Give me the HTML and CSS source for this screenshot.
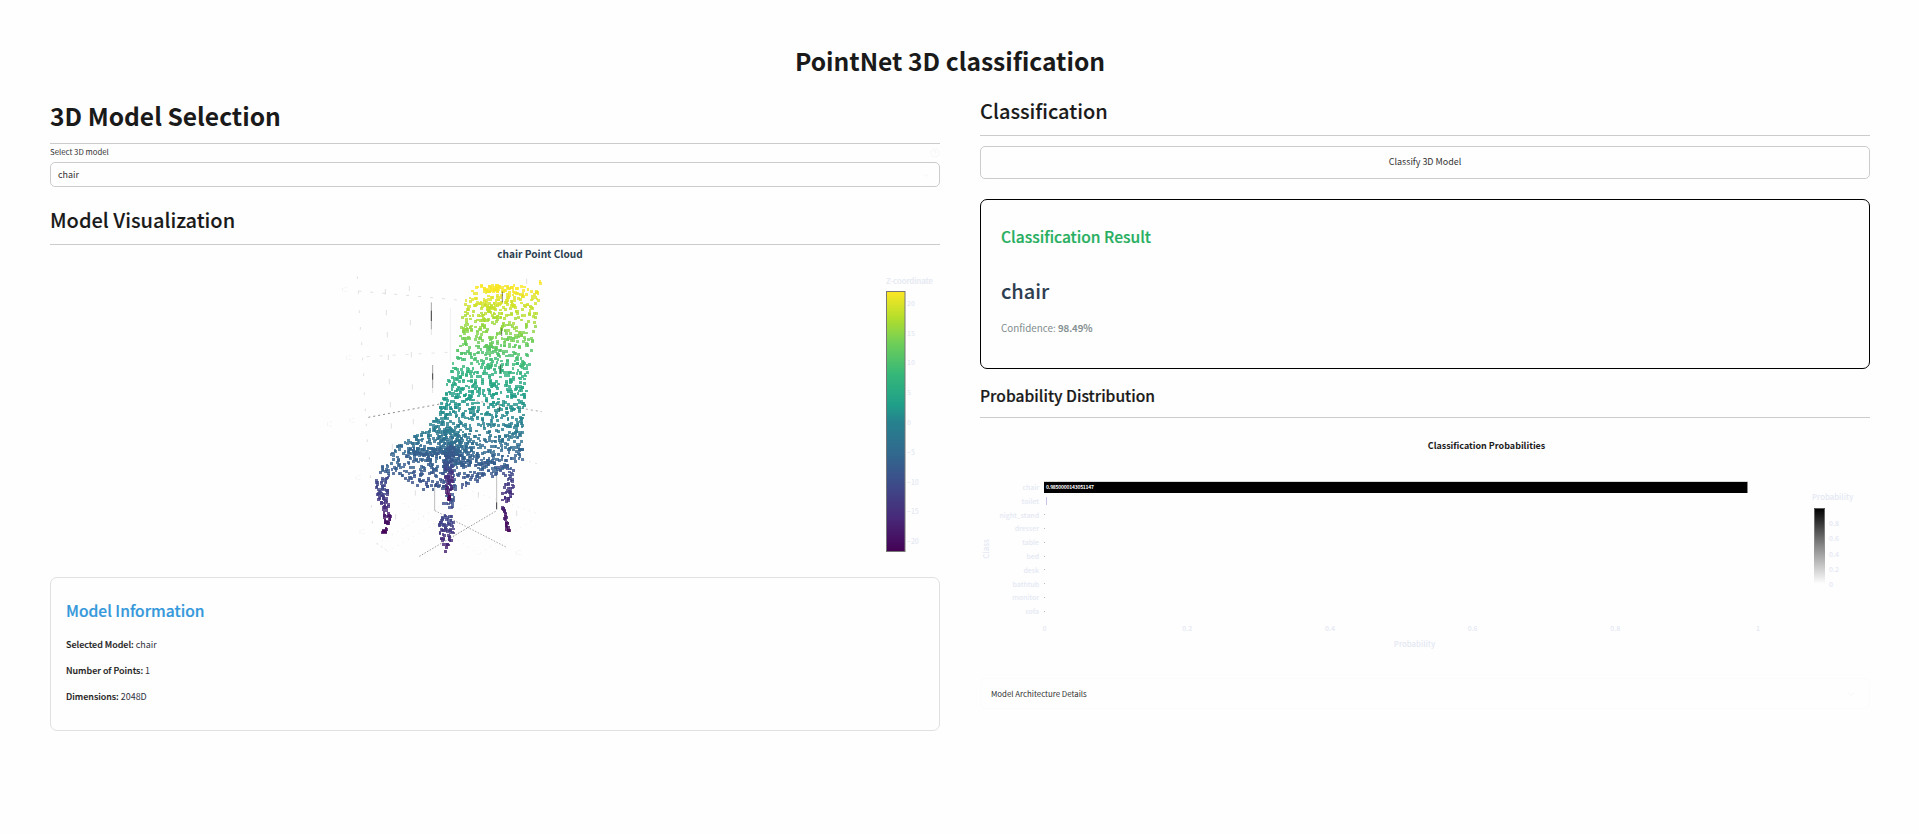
FILE: index.html
```html
<!DOCTYPE html>
<html lang="en">
<head>
<meta charset="utf-8">
<title>PointNet 3D classification</title>
<link rel="stylesheet" href="styles.css">
</head>
<body>
<main class="page">
  <h1 class="title">PointNet 3D classification</h1>
  <div class="columns">
    <section class="column">
      <h1 class="heading heading-xl">3D Model Selection</h1>
      <div class="label-row">
        <label class="label">Select 3D model</label>
        <svg class="help" viewBox="0 0 10 10"><circle cx="5" cy="5" r="4.2"/><path d="M3.8 4a1.2 1.2 0 1 1 1.2 1.3v.6M5 7v.5"/></svg>
      </div>
      <div class="select"><span>chair</span><svg class="chevron" viewBox="0 0 8 8"><path d="M1.5 3 4 5.5 6.500 3"/></svg></div>
      <h2 class="heading heading-lg heading-vis">Model Visualization</h2>
      <svg class="cloud" viewBox="50 245 890 332">
        <defs>
          <linearGradient id="viridis" x1="0" y1="1" x2="0" y2="0">
            <stop offset="0" stop-color="#440154"/><stop offset=".125" stop-color="#482878"/><stop offset=".25" stop-color="#3e4989"/><stop offset=".375" stop-color="#31688e"/><stop offset=".5" stop-color="#26828e"/><stop offset=".56" stop-color="#1f9e89"/><stop offset=".68" stop-color="#35b779"/><stop offset=".8" stop-color="#6ece58"/><stop offset=".9" stop-color="#b5de2b"/><stop offset="1" stop-color="#fde725"/>
          </linearGradient>
        </defs>
        <text class="cloud-title" x="540" y="258" text-anchor="middle">chair Point Cloud</text>
        <g id="grid" class="grid"></g>
        <g id="points"></g>
        <text class="bar-title" x="886" y="284" textLength="47">Z-coordinate</text>
        <rect x="886.5" y="291.500" width="18.500" height="260" fill="url(#viridis)" stroke="#777" stroke-width="1"/>
        <g id="z-ticks" class="tick"></g>
      </svg>
      <div class="info">
        <h3 class="info-title">Model Information</h3>
        <p><strong>Selected Model:</strong> chair</p>
        <p><strong>Number of Points:</strong> 1</p>
        <p><strong>Dimensions:</strong> 2048D</p>
      </div>
    </section>
    <section class="column">
      <h2 class="heading heading-lg heading-cls">Classification</h2>
      <button class="button">Classify 3D Model</button>
      <div class="result">
        <h3 class="result-title">Classification Result</h3>
        <h2 class="result-name">chair</h2>
        <p class="confidence">Confidence: <strong>98.49%</strong></p>
      </div>
      <h3 class="heading heading-md">Probability Distribution</h3>
      <svg class="probs" viewBox="980 418 890 260">
        <defs>
          <linearGradient id="grays" x1="0" y1="1" x2="0" y2="0"><stop offset="0" stop-color="#fff"/><stop offset=".5" stop-color="#888"/><stop offset="1" stop-color="#000"/></linearGradient>
        </defs>
        <text class="probs-title" x="1486.500" y="449.300" text-anchor="middle">Classification Probabilities</text>
        <rect x="1044" y="481" width="704" height="1" fill="#d5dad8"/>
        <rect x="1044" y="482" width="704" height="11" fill="#000"/>
        <rect x="1747" y="482" width="1" height="11" fill="#888"/>
        <text class="bar-value" x="1046" y="489" textLength="48">0.9850000143051147</text>
        <rect x="1046" y="497" width="1" height="8" fill="#c9c2e4"/>
        <g id="classes" class="tick"></g>
        <g id="x-ticks" class="tick"></g>
        <text class="axis-title" x="1414.500" y="647" text-anchor="middle">Probability</text>
        <text class="axis-title" transform="translate(989 549) rotate(-90)" text-anchor="middle">Class</text>
        <text class="axis-title" x="1812" y="500">Probability</text>
        <rect x="1814" y="508" width="11" height="76" fill="url(#grays)"/>
        <path d="M1814.500 550V508.500H1824.500V550" fill="none" stroke="#999" stroke-opacity=".6"/>
        <g id="p-ticks" class="tick"></g>
      </svg>
      <div class="expander"><span>Model Architecture Details</span><svg class="chevron" viewBox="0 0 8 8"><path d="M1.500 3 4 5.500 6.500 3"/></svg></div>
    </section>
  </div>
</main>
<script src="charts.js"></script>
</body>
</html>
```

FILE: styles.css
```css
* { box-sizing: border-box; }
body {
  margin: 0;
  background: #fefefe;
  color: #31333f;
  font-family: "Noto Sans CJK SC", "Noto Sans", sans-serif;
  font-size: 8.95px;
}
h1, h2, h3, p { margin: 0; }
.page { height: 833px; padding: 43px 49px 0 50px; overflow: hidden; }
.title { height: 34px; margin-bottom: 18px; padding-right: 20px; line-height: 34px; font-size: 24.6px; font-weight: 700; color: #1a1a1a; text-align: center; }
.columns { display: grid; grid-template-columns: 890px 890px; gap: 40px; }
.column { display: flex; flex-direction: column; }
.heading { border-bottom: 1px solid #ccc; color: #1a1a1a; }
.heading-xl { height: 49px; padding-top: 2px; line-height: 36px; font-size: 24.6px; font-weight: 700; }
.heading-lg { font-size: 20px; font-weight: 500; -webkit-text-stroke: 0.1px; }
.heading-vis { height: 58px; padding-top: 15px; line-height: 36px; }
.heading-cls { height: 41px; line-height: 32px; }
.heading-md { height: 49px; padding-top: 14px; line-height: 24px; font-size: 15.6px; font-weight: 500; -webkit-text-stroke: 0.2px; }
.label-row { display: flex; align-items: center; justify-content: space-between; height: 18px; }
.label { height: 18px; font-size: 7.8px; line-height: 16px; color: #333; }
.help { width: 10px; height: 10px; fill: none; stroke: #f6f6f8; stroke-width: 1; }
.select { display: flex; align-items: center; justify-content: space-between; height: 25px; padding: 0 9px 0 7px; border: 1px solid #ccc; border-radius: 5px; line-height: 23px; color: #333; }
.chevron { width: 8px; height: 8px; fill: none; stroke: #f5f6f8; stroke-width: 1; }
.cloud { display: block; width: 890px; height: 332px; }
.cloud-title { font-size: 10.1px; font-weight: 700; fill: #2c3e50; }
.grid { stroke: #000; stroke-width: 1; fill: none; }
.bar-title { font-size: 8px; fill: #e8ebf3; font-weight: 700; }
.tick { font-size: 6.9px; fill: #e4e8f3; font-weight: 500; }
.axis-title { font-size: 7.8px; fill: #e4e8f3; font-weight: 500; }
.info { height: 154px; padding: 20px 15px 0; border: 1px solid #e0e0e0; border-radius: 7px; }
.info-title { height: 24px; margin-bottom: 10px; line-height: 24px; font-size: 15.6px; font-weight: 500; color: #3498db; -webkit-text-stroke: 0.2px; }
.info p { height: 26px; line-height: 26px; }
.info strong { font-weight: 500; color: #1a1a1a; -webkit-text-stroke: 0.15px; }
.button { height: 33px; margin-top: 10px; padding: 0 0 1px; border: 1px solid #ccc; border-radius: 5px; background: transparent; color: #333; font: 400 8.95px/28px "Noto Sans CJK SC", sans-serif; }
.result { height: 170px; margin-top: 20px; padding: 24px 20px; border: 1px solid #000; border-radius: 7px; }
.result-title { line-height: 24px; font-size: 15.6px; font-weight: 500; color: #27ae60; -webkit-text-stroke: 0.2px; }
.result-name { margin-top: 26px; line-height: 34px; font-size: 20px; font-weight: 500; color: #2c3e50; -webkit-text-stroke: 0.1px; }
.confidence { margin-top: 11px; line-height: 18px; font-size: 9.85px; color: #7f8c8d; }
.confidence strong { font-weight: 500; -webkit-text-stroke: 0.15px; }
.probs { display: block; width: 890px; height: 260px; }
.probs-title { font-size: 8.95px; font-weight: 700; fill: #1a1a1a; }
.bar-value { font-size: 5px; fill: #fff; font-weight: 700; }
.expander { display: flex; align-items: center; justify-content: space-between; height: 31px; padding: 0 14px 0 10px; border: 1px solid #fcfcfd; border-radius: 5px; font-size: 7.85px; color: #333; }
```

FILE: charts.js
```js
const NS = "http://www.w3.org/2000/svg";
const el = (name, attrs, parent, text) => {
  const node = document.createElementNS(NS, name);
  for (const k in attrs) node.setAttribute(k, attrs[k]);
  if (text !== undefined) node.textContent = text;
  parent.appendChild(node);
};
const byId = id => document.getElementById(id);

// Axis labels
[20, 15, 10, 5, 0, -5, -10, -15, -20].forEach((v, i) =>
  el("text", { x: 907, y: 305.7 + i * 29.8 }, byId("z-ticks"), String(v).replace("-", "−")));
["chair", "toilet", "night_stand", "dresser", "table", "bed", "desk", "bathtub", "monitor", "sofa"].forEach((name, i) => {
  el("text", { x: 1039, y: 490 + i * 13.8, "text-anchor": "end" }, byId("classes"), name);
  if (i > 1) el("rect", { x: 1044, y: Math.round(486.5 + i * 13.8), width: 1, height: 1, fill: "#bbb" }, byId("classes"));
});
["0", "0.2", "0.4", "0.6", "0.8", "1"].forEach((v, i) =>
  el("text", { x: 1044.5 + i * 142.7, y: 631, "text-anchor": "middle" }, byId("x-ticks"), v));
["0.8", "0.6", "0.4", "0.2", "0"].forEach((v, i) =>
  el("text", { x: 1829, y: 526 + i * 15.25 }, byId("p-ticks"), v));

// Cloud coordinates use a 3x plane anchored at (320, 240)
const X = v => 320 + v / 3, Y = v => 240 + v / 3;
const line = (x1, y1, x2, y2, opacity, dash) =>
  el("path", { d: `M${X(x1)} ${Y(y1)}L${X(x2)} ${Y(y2)}`, "stroke-opacity": opacity, "stroke-dasharray": dash || "none" }, byId("grid"));
line(145, 532, 370, 490, 0.45, "2 3");
line(440, 478, 665, 515, 0.35, "2 3");
line(298, 949, 530, 812, 0.4, "1.5 1.5");
line(345, 812, 560, 922, 0.35, "1.5 1.5");
line(344, 735, 344, 812, 0.25);
line(530, 700, 530, 787, 0.25);
line(530, 787, 530, 808, 0.8);
line(391, 205, 391, 365, 0.06);
[[334, 187, 268], [338, 375, 444]].forEach(([x, a, b]) => {
  line(x, a, x, b, 0.35);
  line(x, a + 25, x, b - 25, 0.6);
});
line(334, 268, 334, 285, 0.1);
line(338, 444, 338, 459, 0.1);
[[112, 113], [115, 158], [118, 215], [121, 265], [125, 311], [128, 357], [131, 404], [133, 461], [136, 510], [139, 555], [142, 602], [148, 655], [151, 710], [154, 799], [157, 847],
 [196, 155], [199, 218], [202, 284], [205, 352], [208, 425], [211, 494], [214, 558], [217, 620], [227, 830],
 [268, 145], [271, 248], [274, 344], [277, 441], [280, 545], [286, 759], [475, 765], [590, 820], [620, 124]].forEach(([x, y]) => {
  const half = x < 160 ? 4 : 8;
  line(x, y - half, x, y + half, 0.12);
});
line(115, 153, 425, 181, 0.12, "3 9");
line(140, 350, 420, 335, 0.1, "3 10");
line(170, 912, 375, 790, 0.08, "1 5");
line(202, 935, 440, 795, 0.08, "1 5");
line(170, 910, 205, 935, 0.12, "2 3");
line(440, 748, 650, 820, 0.08, "1 5");
line(250, 790, 480, 945, 0.07, "1 5");
line(480, 940, 645, 835, 0.07, "1 5");
line(610, 660, 655, 672, 0.1, "2 4");
[[75, 148], [87, 353], [30, 552], [97, 541], [115, 713], [127, 875], [596, 938]].forEach(([x, y]) => {
  line(x - 7, y - 5, x - 7, y + 6, 0.05);
  line(x - 2, y - 6, x + 7, y - 6, 0.04);
  line(x - 2, y + 6, x + 7, y + 6, 0.04);
});

let seed = 7;
const rnd = () => (seed = (seed * 16807) % 2147483647) / 2147483647;
const ramp = [[68, 1, 84], [72, 40, 120], [62, 73, 137], [49, 104, 142], [38, 130, 142], [31, 158, 137], [53, 183, 121], [110, 206, 88], [181, 222, 43], [253, 231, 37]];
const colour = t => {
  const f = Math.max(0, Math.min(0.9999, t)) * 9, i = Math.floor(f);
  return "rgb(" + ramp[i].map((c, k) => Math.round(c + (ramp[i + 1][k] - c) * (f - i))) + ")";
};
const dot = (x, y, t) => el("rect", {
  x: Math.round(X(x) - 1.5), y: Math.round(Y(y) - 1.5),
  width: rnd() < 0.8 ? 3 : 2, height: rnd() < 0.8 ? 3 : 2,
  fill: colour(t + (rnd() - 0.5) * 0.03), "fill-opacity": 0.8
}, byId("points"));
const interp = (rows, y) => {
  let i = 0;
  while (i < rows.length - 2 && y > rows[i + 1][0]) i++;
  const a = rows[i], b = rows[i + 1], f = (y - a[0]) / (b[0] - a[0]);
  return a.slice(1).map((v, k) => v + (b[k + 1] - v) * f);
};
// Each band row: y, left, right, colour position
const fillBand = (rows, count) => {
  const widest = Math.max(...rows.map(r => r[2] - r[1]));
  for (let n = 0; n < count;) {
    const y = rows[0][0] + rnd() * (rows[rows.length - 1][0] - rows[0][0]);
    const [l, r, t] = interp(rows, y);
    if (rnd() * widest > r - l) continue;
    dot(l + rnd() * (r - l), y, t);
    n++;
  }
};
const back = [[136, 475, 645, 1], [165, 436, 658, 0.97], [215, 432, 652, 0.9], [290, 416, 643, 0.8], [350, 405, 632, 0.7], [400, 392, 625, 0.64], [470, 370, 620, 0.55], [540, 352, 610, 0.45], [600, 350, 610, 0.37], [650, 370, 608, 0.31], [680, 400, 605, 0.28]];
fillBand([[680, 530, 585, 0.25], [720, 558, 580, 0.19], [770, 545, 580, 0.13], [785, 548, 568, 0.1]], 50);
fillBand([[800, 545, 562, 0.09], [835, 552, 563, 0.06], [873, 556, 569, 0.01]], 26);
fillBand(back, 1230);
fillBand([[535, 345, 380, 0.45], [580, 300, 410, 0.4], [620, 230, 450, 0.34], [650, 205, 480, 0.31], [680, 182, 585, 0.3], [700, 180, 550, 0.28], [720, 260, 485, 0.26], [750, 310, 410, 0.25]], 510);
fillBand([[625, 265, 420, 0.33], [650, 275, 420, 0.29]], 90);
fillBand([[620, 375, 405, 0.29], [665, 370, 400, 0.27], [690, 375, 395, 0.2]], 65);
fillBand([[690, 373, 400, 0.18], [740, 380, 396, 0.09], [786, 381, 395, 0.01]], 55);
fillBand([[762, 368, 405, 0.27], [808, 365, 402, 0.23]], 14);
fillBand([[826, 362, 402, 0.22], [860, 356, 402, 0.19], [900, 362, 398, 0.12], [925, 380, 396, 0.08]], 70);
fillBand([[712, 168, 205, 0.24], [770, 172, 204, 0.18], [815, 190, 208, 0.1]], 72);
fillBand([[815, 192, 212, 0.07], [840, 194, 212, 0.04], [882, 186, 196, 0.01]], 32);
[[510, 150], [520, 145], [535, 143], [510, 200], [505, 318]].forEach(([x, y]) => {
  for (let i = 0; i < 9; i++) {
    const dy = (rnd() - 0.5) * 14;
    dot(x + (rnd() - 0.5) * 26, y + dy, interp(back, y + dy)[2]);
  }
});
dot(660, 124, 1);
dot(660, 131, 1);
dot(376, 935, 0.09);
[[547, 155, 187], [545, 265, 288], [541, 372, 400], [538, 490, 515]].forEach(([x, a, b]) =>
  el("path", { d: `M${X(x)} ${Y(a)}V${Y(b)}`, stroke: "#222", "stroke-opacity": 0.55 }, byId("points")));
```
